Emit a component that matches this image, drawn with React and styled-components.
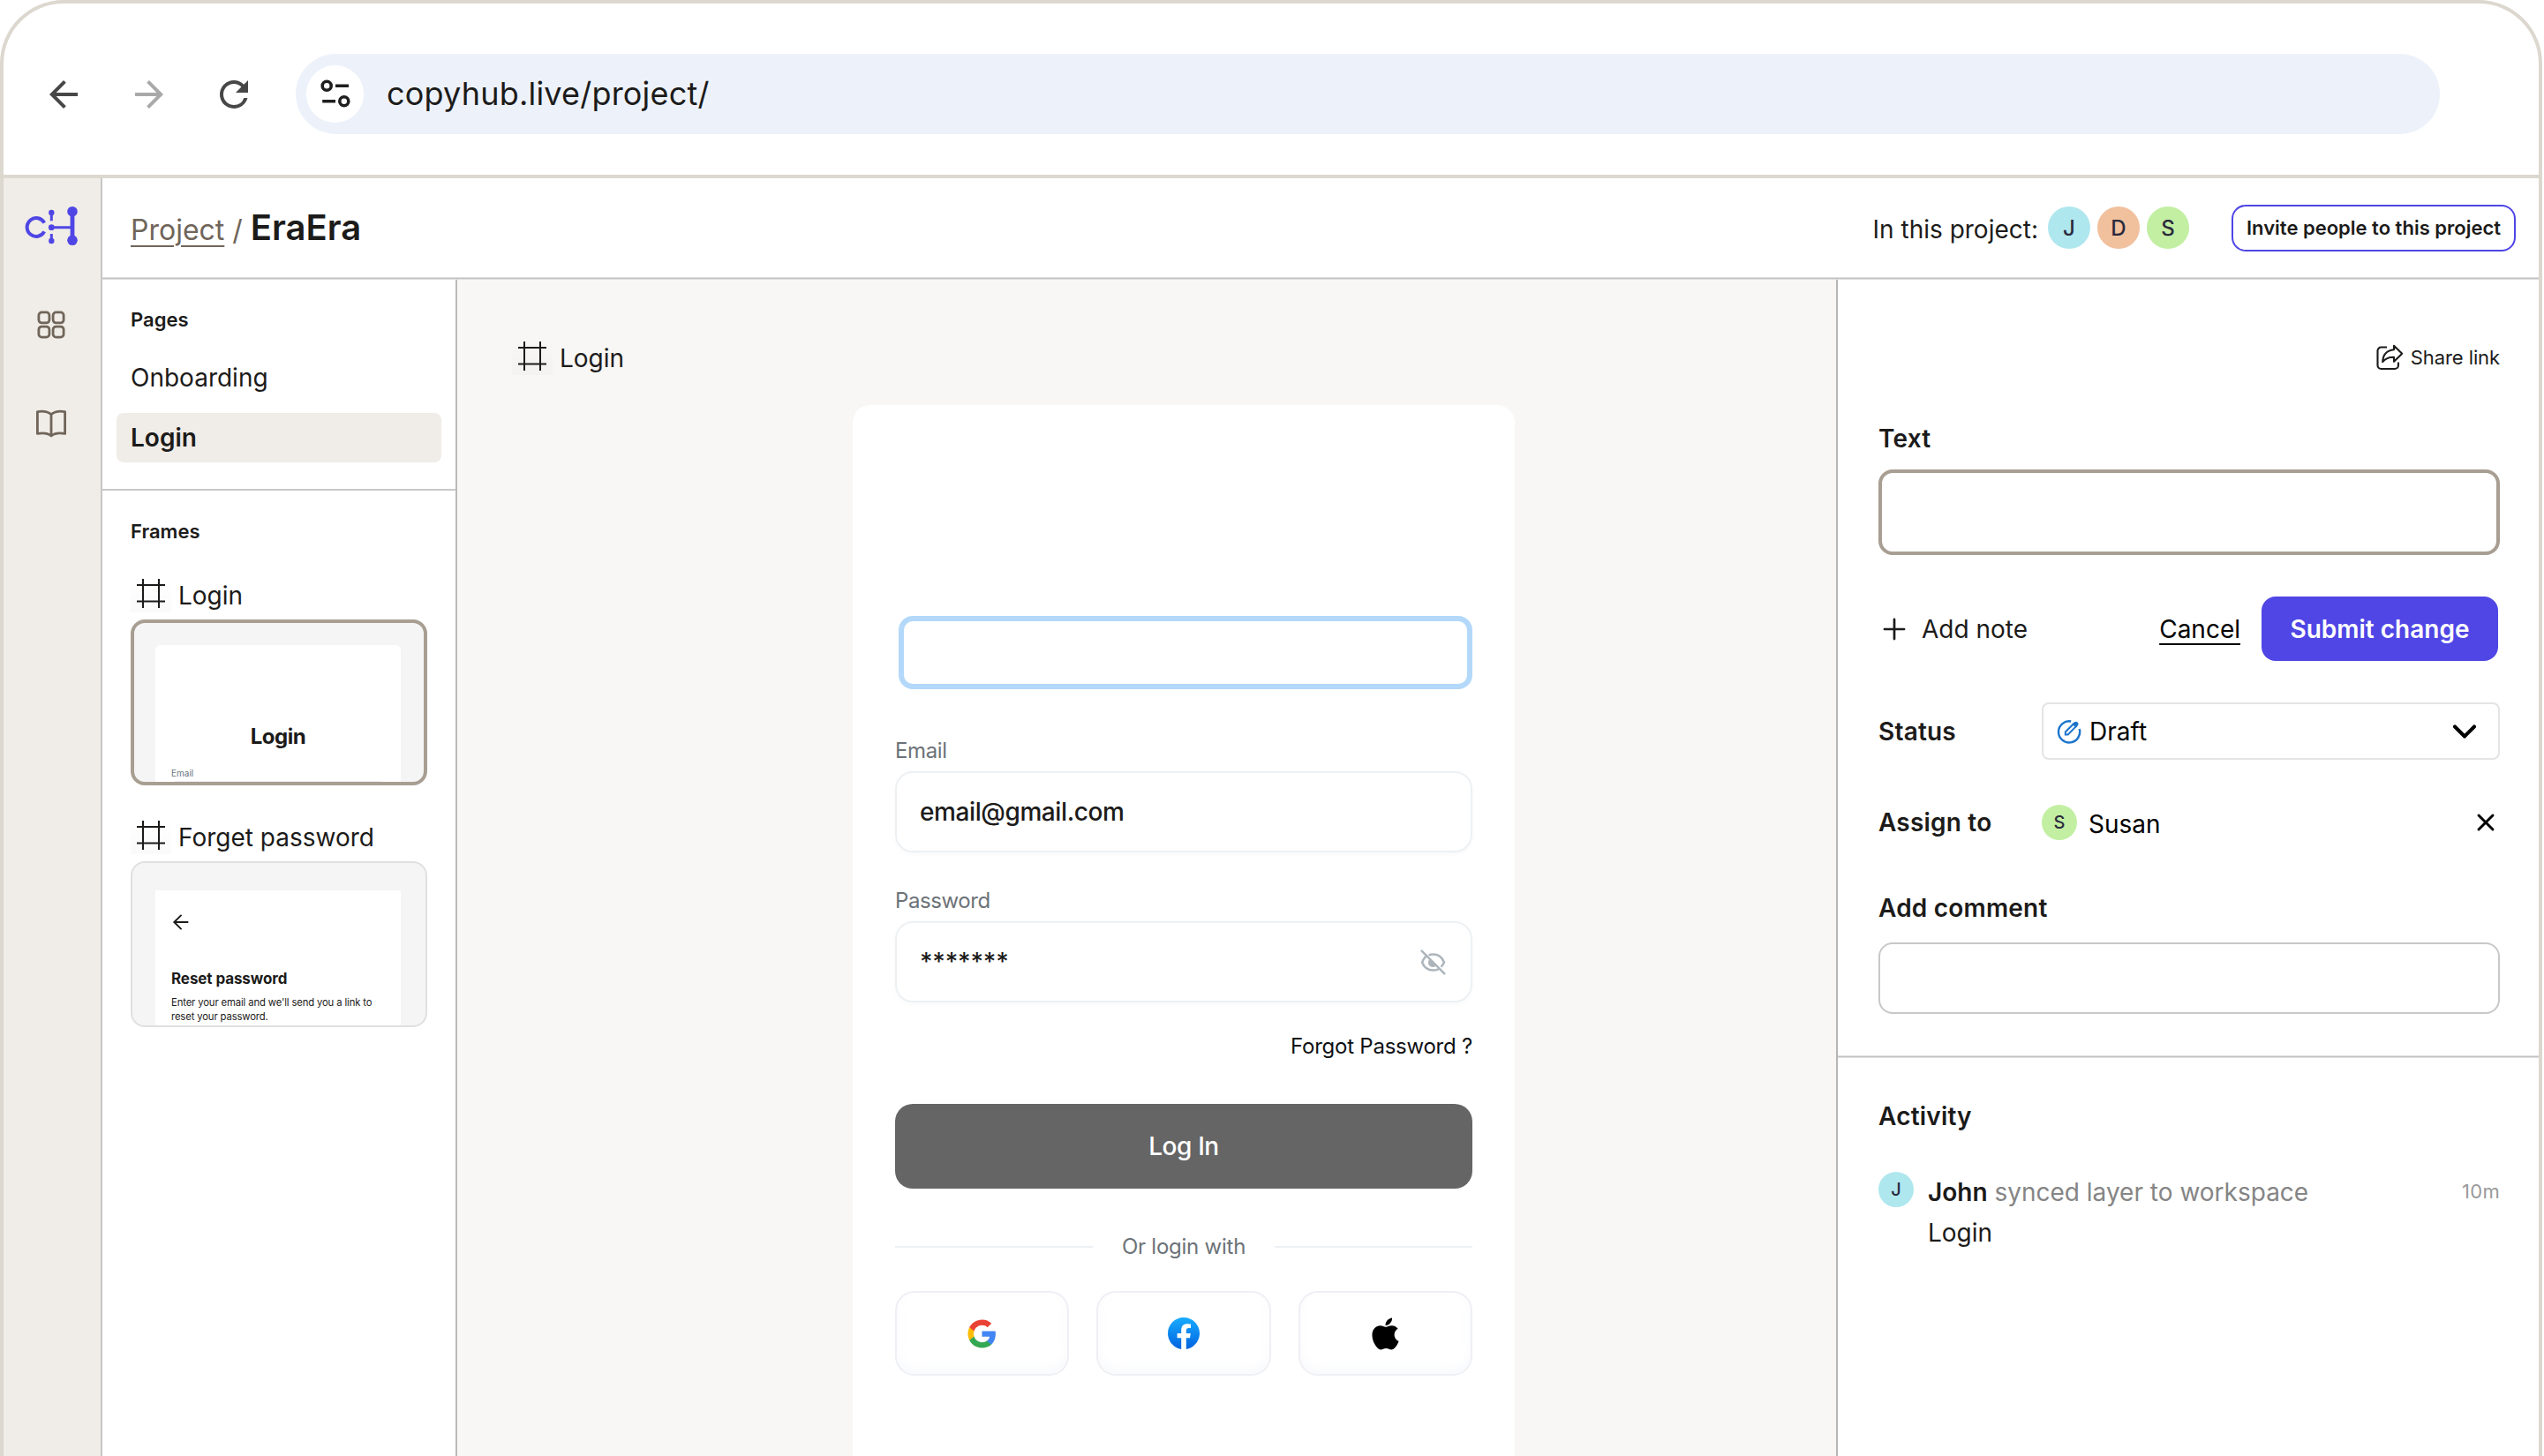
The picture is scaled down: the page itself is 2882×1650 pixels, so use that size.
import React, { useState } from "react";
import styled, { createGlobalStyle } from "styled-components";
import { MdArrowBack, MdArrowForward, MdRefresh } from "react-icons/md";
import { FaApple } from "react-icons/fa6";
import { ArrowLeft, ChevronDown, Plus, X } from "lucide-react";

const GlobalStyle = createGlobalStyle`
    * {
        box-sizing: border-box;
    }
    body {
        margin: 0;
        background: #fff;
        color: #1c1b1a;
        font-family: Inter, "Liberation Sans", sans-serif;
        font-size: 28px;
        overflow: hidden;
    }
    button, input {
        font: inherit;
        color: inherit;
        outline: none;
    }
    svg {
        display: block;
        flex-shrink: 0;
    }
`;

const Window = styled.div`
    width: 2880px;
    height: 1650px;
    border: 4px solid #dcd8cf;
    border-bottom: none;
    border-radius: 72px 72px 0 0;
    overflow: hidden;
    display: flex;
    flex-direction: column;
`;

const BrowserBar = styled.div`
    height: 198px;
    flex-shrink: 0;
    border-bottom: 4px solid #dcd8cf;
    padding: 11px 112px 0 44px;
    display: flex;
    align-items: center;
    gap: 48.5px;
`;

const AddressBar = styled.div`
    flex: 1;
    height: 91px;
    margin-left: -2.5px;
    padding: 0 0 1px 12px;
    border-radius: 46px;
    background: #edf2fa;
    display: flex;
    align-items: center;
    gap: 26px;
    font-size: 36px;
    line-height: 44px;
    letter-spacing: 0.2px;
`;

const SiteInfo = styled.div`
    width: 65px;
    height: 65px;
    border-radius: 50%;
    background: #fff;
    display: flex;
    align-items: center;
    justify-content: center;
`;

const Body = styled.div`
    flex: 1;
    min-height: 0;
    display: flex;
`;

const Rail = styled.nav`
    width: 112px;
    flex-shrink: 0;
    border-right: 2px solid #c8c6c6;
    background: #f0ece7;
    padding: 30px 2px 0 0;
    display: flex;
    flex-direction: column;
    align-items: center;
`;

const RailNav = styled.div`
    margin-top: 32px;
`;

const RailItem = styled.a`
    height: 112px;
    color: #70655a;
    display: flex;
    align-items: center;
    justify-content: center;
`;

const Main = styled.div`
    flex: 1;
    min-width: 0;
    display: flex;
    flex-direction: column;
`;

const Header = styled.header`
    height: 112px;
    flex-shrink: 0;
    padding: 0 26px 0 32px;
    display: flex;
    align-items: center;
    justify-content: space-between;
`;

const Divider = styled.div`
    height: 3px;
    flex-shrink: 0;
    background: linear-gradient(#dedede 1px, #c2c2c2 1px 2px, #dedede 2px);
`;

const Breadcrumb = styled.div`
    padding-top: 2px;
    display: flex;
    align-items: baseline;
    gap: 9px;
    font-size: 32px;
    line-height: 50px;
    color: #70655a;
`;

const Crumb = styled.a`
    text-decoration: underline;
    text-decoration-thickness: 2px;
    text-underline-offset: 6px;
`;

const ProjectName = styled.h1`
    margin: 0;
    font-size: 40px;
    line-height: 50px;
    font-weight: 600;
    color: #1c1b1a;
`;

const Members = styled.div`
    display: flex;
    align-items: center;
    gap: 8px;
`;

const MembersLabel = styled.span`
    margin-right: 3px;
    padding-top: 3px;
    line-height: 36px;
`;

const Avatar = styled.div`
    width: ${(props) => props.$size}px;
    height: ${(props) => props.$size}px;
    flex-shrink: 0;
    border-radius: 50%;
    background: ${(props) => props.$color};
    color: #2a2a3c;
    font-size: ${(props) => props.$size / 2}px;
    font-weight: 500;
    display: flex;
    align-items: center;
    justify-content: center;
`;

const InviteButton = styled.button`
    width: 322px;
    height: 53px;
    margin-left: 40px;
    padding: 0;
    border: 2px solid #4f46e5;
    border-radius: 16px;
    background: #fff;
    font-size: 22px;
    font-weight: 600;
    white-space: nowrap;
`;

const Workspace = styled.div`
    flex: 1;
    min-height: 0;
    display: flex;
`;

const LeftPanel = styled.aside`
    width: 402px;
    flex-shrink: 0;
    border-right: 2px solid #b9b9b9;
`;

const PagesSection = styled.section`
    padding: 30px 16px;
    border-bottom: 2px solid #c9c9c9;
`;

const FramesSection = styled.section`
    padding: 31px 32px 0;
`;

const SectionTitle = styled.h2`
    margin: 0;
    padding-left: ${(props) => props.$indent || 0}px;
    font-size: 22px;
    line-height: 30px;
    font-weight: 600;
`;

const PageItem = styled.div`
    height: 56px;
    margin-top: ${(props) => props.$gap}px;
    padding-left: 16px;
    border-radius: 8px;
    background: ${(props) => (props.$active ? "#f0ece7" : "transparent")};
    font-weight: ${(props) => (props.$active ? 600 : 400)};
    display: flex;
    align-items: center;
`;

const FrameTitle = styled.div`
    height: 48px;
    margin-top: ${(props) => props.$gap || 0}px;
    line-height: 42px;
    display: flex;
    align-items: flex-start;
    gap: 8px;
`;

const FrameIconBox = styled.div`
    width: 46px;
    height: 40px;
    padding: 2px 7px;
    background: linear-gradient(transparent, rgba(0, 0, 0, 0.02));
`;

const Thumb = styled.div`
    width: 336px;
    height: 188px;
    border: ${(props) => (props.$active ? "4px solid #a89e92" : "2px solid #e0e0e0")};
    border-radius: 16px;
    background: #f5f5f5;
    padding: ${(props) => (props.$active ? "25px 26px 0 24px" : "31px 28px 0 26px")};
    overflow: hidden;
`;

const Paper = styled.div`
    height: 100%;
    padding: ${(props) => props.$top}px 18px 0;
    border-radius: ${(props) => props.$radius || 0}px;
    background: #fff;
    border-bottom-left-radius: 0;
    border-bottom-right-radius: 0;
    overflow: hidden;
`;

const BackArrow = styled(ArrowLeft)`
    margin-left: -2px;
`;

const MiniHeading = styled.div`
    font-size: 24px;
    line-height: 30px;
    font-weight: 700;
    letter-spacing: -0.5px;
    text-align: center;
`;

const MiniLabel = styled.div`
    margin-top: 20px;
    font-size: 10px;
    line-height: 12px;
    color: #6c757d;
`;

const MiniInput = styled.div`
    height: 20px;
    margin-top: 3px;
    border: 1px solid #eceff1;
    border-radius: 6px;
`;

const MiniTitle = styled.div`
    margin-top: 40px;
    font-size: 17px;
    line-height: 22px;
    font-weight: 700;
    letter-spacing: -0.1px;
`;

const MiniText = styled.div`
    margin-top: 8px;
    font-size: 11.3px;
    line-height: 16px;
    letter-spacing: -0.14px;
    white-space: nowrap;
`;

const Canvas = styled.main`
    flex: 1;
    min-width: 0;
    padding: 68px 0 0 62px;
    background: #f8f7f5;
    display: flex;
    flex-direction: column;
`;

const LoginCard = styled.div`
    width: 750px;
    flex: 1;
    margin: 26px 0 0 386px;
    padding: 239px 48px 0;
    border-radius: 20px 20px 0 0;
    background: #fff;
`;

const SelectedLayer = styled.div`
    height: 83px;
    margin-left: 4px;
    border: 6px solid #b3d8f9;
    border-radius: 16px;
`;

const FieldLabel = styled.label`
    display: block;
    margin-top: ${(props) => props.$gap}px;
    font-size: 24px;
    line-height: 30px;
    letter-spacing: -0.4px;
    color: #6c7278;
`;

const Field = styled.div`
    height: 92px;
    margin-top: 8px;
    padding: 0 28px 0 26px;
    border: 2px solid #edf1f3;
    border-radius: 20px;
    box-shadow: 0 2px 4px rgba(228, 229, 231, 0.24);
    font-weight: 500;
    letter-spacing: ${(props) => props.$spacing}px;
    display: flex;
    align-items: center;
    justify-content: space-between;
`;

const ForgotLink = styled.div`
    margin-top: 35px;
    font-size: 24px;
    line-height: 30px;
    letter-spacing: -0.24px;
    text-align: right;
    color: #0f1114;
`;

const LoginButton = styled.button`
    width: 100%;
    height: 96px;
    margin-top: 50px;
    border: none;
    border-radius: 20px;
    background: #656565;
    color: #fff;
    font-weight: 500;
    letter-spacing: -0.4px;
`;

const OrRow = styled.div`
    height: 30px;
    margin-top: 51px;
    display: flex;
    align-items: center;
    justify-content: space-between;
    font-size: 24px;
    line-height: 30px;
    letter-spacing: -0.24px;
    color: #6c7278;

    &::before,
    &::after {
        content: "";
        width: 224px;
        height: 2px;
        background: #edf1f3;
    }
`;

const SocialRow = styled.div`
    margin-top: 35px;
    display: grid;
    grid-template-columns: repeat(3, 1fr);
    gap: 31px;
`;

const SocialButton = styled.button`
    height: 96px;
    padding: 0;
    border: 2px solid #efeff5;
    border-radius: 22px;
    background: #fff;
    box-shadow: inset 0 -6px 12px rgba(244, 245, 250, 0.6);
    color: #000;
    display: flex;
    align-items: center;
    justify-content: center;
`;

const RightPanel = styled.aside`
    width: 796px;
    flex-shrink: 0;
    border-left: 2px solid #b5b5b5;
`;

const PanelSection = styled.section`
    padding: ${(props) => props.$pad};
`;

const ShareLink = styled.a`
    height: 30px;
    display: flex;
    align-items: center;
    justify-content: flex-end;
    gap: 8px;
    font-size: 22px;
    line-height: 30px;
    letter-spacing: -0.1px;
`;

const PanelTitle = styled.h3`
    width: ${(props) => props.$width || "auto"};
    margin: ${(props) => props.$gap || 0}px 0 0;
    font-size: 28px;
    line-height: 36px;
    font-weight: 600;
    letter-spacing: 0.2px;
`;

const TextBox = styled.input`
    display: block;
    width: 100%;
    height: ${(props) => props.$height}px;
    margin-top: ${(props) => props.$gap}px;
    padding: 0 20px;
    border: ${(props) => props.$border};
    border-radius: 16px;
    background: #fff;
`;

const Actions = styled.div`
    height: 73px;
    margin-top: 47px;
    display: flex;
    align-items: center;
`;

const AddNote = styled.div`
    flex: 1;
    margin-left: -1px;
    display: flex;
    align-items: center;
    gap: 12px;
`;

const Cancel = styled.a`
    margin-right: 24px;
    color: #000;
    text-decoration: underline;
    text-decoration-thickness: 2px;
    text-underline-offset: 6px;
`;

const SubmitButton = styled.button`
    width: 268px;
    height: 73px;
    margin-right: 2px;
    padding: 0;
    border: none;
    border-radius: 16px;
    background: #4f46e5;
    color: #fff;
    font-weight: 600;
`;

const Row = styled.div`
    height: ${(props) => props.$height}px;
    margin-top: ${(props) => props.$gap}px;
    display: flex;
    align-items: center;
    color: #000;

    h3 {
        color: #1c1b1a;
    }
`;

const StatusSelect = styled.div`
    flex: 1;
    height: 65px;
    padding: 0 16px 0 15px;
    border: 2px solid #e4e4e4;
    border-radius: 8px;
    display: flex;
    align-items: center;
    gap: 9px;
`;

const Grow = styled.span`
    flex: 1;
    padding-top: ${(props) => props.$drop || 0}px;
    padding-left: ${(props) => props.$indent || 0}px;
`;

const ActivityItem = styled.div`
    margin-top: 45px;
    display: flex;
    align-items: flex-start;
    gap: 16px;
    line-height: 46px;
`;

const ActivityText = styled.div`
    flex: 1;
    color: #858585;

    strong {
        font-weight: 600;
        color: #1c1b1a;
    }
    div {
        color: #1c1b1a;
    }
`;

const Time = styled.span`
    font-size: 22px;
    line-height: 44px;
    letter-spacing: 0.3px;
    color: #9a9a9a;
`;

const TuneIcon = () => (
    <svg width="36" height="34" viewBox="0 0 36 34" fill="none" stroke="#1f1f1f" strokeWidth="3.6">
        <circle cx="8.2" cy="8.2" r="5" />
        <path d="M18 8.2h15M3.2 25.8H18" />
        <circle cx="27.8" cy="25.8" r="5" />
    </svg>
);

const Logo = () => (
    <svg width="61" height="48" viewBox="0 0 61 48" fill="none" stroke="#4f46e5">
        <path d="M22.2 20.6a10.4 10.4 0 1 0 0 9.8" strokeWidth="4" />
        <path d="M30.3 9v9.3M30.3 33v8M30.3 25.7H54" strokeWidth="3" />
        <path d="M54 8v32" strokeWidth="4.8" />
        <g fill="#4f46e5" stroke="none">
            <circle cx="30.3" cy="9" r="3.2" />
            <circle cx="30.3" cy="25.7" r="3.4" />
            <circle cx="30.3" cy="41" r="3.2" />
            <circle cx="54" cy="7.7" r="5.8" />
            <circle cx="54" cy="40.3" r="5.8" />
        </g>
    </svg>
);

const GridIcon = () => (
    <svg width="32" height="32" viewBox="0 0 32 32" fill="none" stroke="currentColor" strokeWidth="2.8">
        <rect x="1.9" y="1.9" width="12" height="12" rx="3.4" />
        <rect x="18.1" y="1.9" width="12" height="12" rx="3.4" />
        <rect x="1.9" y="18.1" width="12" height="12" rx="3.4" />
        <rect x="18.1" y="18.1" width="12" height="12" rx="3.4" />
    </svg>
);

const BookIcon = () => (
    <svg width="34" height="32" viewBox="0 0 34 32" fill="none" stroke="currentColor" strokeWidth="2.8" strokeLinejoin="round">
        <path d="M17 5.6C13 2.2 7 1.6 1.4 2.6v24.8C7 26.4 13 26.6 17 30c4-3.4 10-3.6 15.6-2.6V2.6C27 1.6 21 2.2 17 5.6zM17 5.6V30" />
    </svg>
);

const FrameIcon = () => (
    <FrameIconBox>
        <svg width="32" height="33" viewBox="0 0 32 33" fill="none" stroke="#1c1b1a" strokeWidth="2">
            <path d="M7 0v33M25 0v33M0 7h32M0 25.5h32" />
        </svg>
    </FrameIconBox>
);

const EyeOffIcon = () => (
    <svg width="29" height="29" viewBox="0 0 28 28" fill="none" stroke="#acb5bb" strokeWidth="2.4" strokeLinecap="round">
        <path d="M1.6 1.5 26.4 26.4" />
        <path d="M10.2 5.8c1.2-.4 2.5-.6 3.8-.6 6 0 10.2 4 12 8.8-.6 1.6-1.5 3-2.6 4.3" />
        <path d="M5.6 8C4 9.6 2.8 11.7 2 14c1.8 4.8 6 8.8 12 8.8 2.1 0 4-.5 5.6-1.3" />
        <path d="M10.3 11.2a4.4 4.4 0 0 0 6.4 6.2z" fill="#acb5bb" strokeWidth="1" />
    </svg>
);

const GoogleIcon = () => (
    <svg width="35" height="35" viewBox="0 0 24 24">
        <path fill="#4285F4" d="M22.56 12.25c0-.78-.07-1.53-.2-2.25H12v4.26h5.92c-.26 1.37-1.04 2.53-2.21 3.31v2.77h3.57c2.08-1.92 3.28-4.74 3.28-8.09z" />
        <path fill="#34A853" d="M12 23c2.97 0 5.46-.98 7.28-2.66l-3.57-2.77c-.98.66-2.23 1.06-3.71 1.06-2.86 0-5.29-1.93-6.16-4.53H2.18v2.84C3.99 20.53 7.7 23 12 23z" />
        <path fill="#FBBC05" d="M5.84 14.09c-.22-.66-.35-1.36-.35-2.09s.13-1.43.35-2.09V7.07H2.18C1.43 8.55 1 10.22 1 12s.43 3.45 1.18 4.93l2.85-2.22.81-.62z" />
        <path fill="#EA4335" d="M12 5.38c1.62 0 3.06.56 4.21 1.64l3.15-3.15C17.45 2.09 14.97 1 12 1 7.7 1 3.99 3.47 2.18 7.07l3.66 2.84c.87-2.6 3.3-4.53 6.16-4.53z" />
    </svg>
);

const FacebookIcon = () => (
    <svg width="36" height="36" viewBox="0 0 24 24">
        <defs>
            <linearGradient id="fb" x1="0" y1="0" x2="0" y2="1">
                <stop offset="0" stopColor="#18acfe" />
                <stop offset="1" stopColor="#0163e0" />
            </linearGradient>
        </defs>
        <path fill="url(#fb)" d="M24 12.073c0-6.627-5.373-12-12-12s-12 5.373-12 12c0 5.99 4.388 10.954 10.125 11.854v-8.385H7.078v-3.47h3.047V9.43c0-3.007 1.792-4.669 4.533-4.669 1.312 0 2.686.235 2.686.235v2.953H15.83c-1.491 0-1.956.925-1.956 1.874v2.25h3.328l-.532 3.47h-2.796v8.385C19.612 23.027 24 18.062 24 12.073z" />
    </svg>
);

const ShareIcon = () => (
    <svg width="32" height="32" viewBox="0 0 32 32" fill="none" stroke="#1c1b1a" strokeWidth="2.1" strokeLinejoin="round">
        <path d="M13 4.5H6.5a4 4 0 0 0-4 4V25a4 4 0 0 0 4 4H22a4 4 0 0 0 4-4v-3.5" />
        <path d="M21 2.8l9.2 8.9L21 20.8v-5c-5.5-.2-9.6 1.5-12.8 5.4C8.5 13.3 13 8 21 7.2z" />
    </svg>
);

const DraftIcon = () => (
    <svg width="28" height="28" viewBox="0 0 28 28" fill="none" stroke="#1b74cc" strokeWidth="2.4">
        <path d="M16.2 2.5A12.1 12.1 0 1 0 25.7 11" />
        <path d="M9.8 17.4v-2.9l9.3-9.3 2.9 2.9-9.3 9.3z" strokeWidth="2" />
        <path d="M18.6 5.7l1.6-1.6a1.8 1.8 0 0 1 2.9 2.9l-1.6 1.6z" fill="#1b74cc" strokeWidth="1.4" />
    </svg>
);

const members = [
    { initial: "J", color: "#afe7ee" },
    { initial: "D", color: "#f1c09d" },
    { initial: "S", color: "#c2efa2" },
];

const App = () => {
    const [text, setText] = useState("");
    const [comment, setComment] = useState("");

    return (
        <>
            <GlobalStyle />
            <Window>
                <BrowserBar>
                    <MdArrowBack size={48} color="#474747" />
                    <MdArrowForward size={48} color="#a9a9a9" />
                    <MdRefresh size={48} color="#474747" />
                    <AddressBar>
                        <SiteInfo>
                            <TuneIcon />
                        </SiteInfo>
                        copyhub.live/project/
                    </AddressBar>
                </BrowserBar>
                <Body>
                    <Rail>
                        <Logo />
                        <RailNav>
                            <RailItem>
                                <GridIcon />
                            </RailItem>
                            <RailItem>
                                <BookIcon />
                            </RailItem>
                        </RailNav>
                    </Rail>
                    <Main>
                        <Header>
                            <Breadcrumb>
                                <Crumb>Project</Crumb>
                                <span>/</span>
                                <ProjectName>EraEra</ProjectName>
                            </Breadcrumb>
                            <Members>
                                <MembersLabel>In this project:</MembersLabel>
                                {members.map((member) => (
                                    <Avatar key={member.initial} $size={48} $color={member.color}>
                                        {member.initial}
                                    </Avatar>
                                ))}
                                <InviteButton>Invite people to this project</InviteButton>
                            </Members>
                        </Header>
                        <Divider />
                        <Workspace>
                            <LeftPanel>
                                <PagesSection>
                                    <SectionTitle $indent={16}>Pages</SectionTitle>
                                    <PageItem $gap={23}>Onboarding</PageItem>
                                    <PageItem $gap={12} $active>
                                        Login
                                    </PageItem>
                                </PagesSection>
                                <FramesSection>
                                    <SectionTitle>Frames</SectionTitle>
                                    <FrameTitle $gap={37}>
                                        <FrameIcon />
                                        Login
                                    </FrameTitle>
                                    <Thumb $active>
                                        <Paper $top={89} $radius={6}>
                                            <MiniHeading>Login</MiniHeading>
                                            <MiniLabel>Email</MiniLabel>
                                            <MiniInput />
                                        </Paper>
                                    </Thumb>
                                    <FrameTitle $gap={38}>
                                        <FrameIcon />
                                        Forget password
                                    </FrameTitle>
                                    <Thumb>
                                        <Paper $top={23}>
                                            <BackArrow size={26} strokeWidth={1.8} />
                                            <MiniTitle>Reset password</MiniTitle>
                                            <MiniText>
                                                Enter your email and we'll send you a link to
                                                <br />
                                                reset your password.
                                            </MiniText>
                                        </Paper>
                                    </Thumb>
                                </FramesSection>
                            </LeftPanel>
                            <Canvas>
                                <FrameTitle>
                                    <FrameIcon />
                                    Login
                                </FrameTitle>
                                <LoginCard>
                                    <SelectedLayer />
                                    <FieldLabel $gap={55}>Email</FieldLabel>
                                    <Field $spacing={-0.4}>email@gmail.com</Field>
                                    <FieldLabel $gap={40}>Password</FieldLabel>
                                    <Field $spacing={-0.2}>
                                        *******
                                        <EyeOffIcon />
                                    </Field>
                                    <ForgotLink>Forgot Password ?</ForgotLink>
                                    <LoginButton>Log In</LoginButton>
                                    <OrRow>Or login with</OrRow>
                                    <SocialRow>
                                        <SocialButton>
                                            <GoogleIcon />
                                        </SocialButton>
                                        <SocialButton>
                                            <FacebookIcon />
                                        </SocialButton>
                                        <SocialButton>
                                            <FaApple size={41} />
                                        </SocialButton>
                                    </SocialRow>
                                </LoginCard>
                            </Canvas>
                            <RightPanel>
                                <PanelSection $pad="73px 44px 47px 46px">
                                    <ShareLink>
                                        <ShareIcon />
                                        Share link
                                    </ShareLink>
                                    <PanelTitle $gap={59}>Text</PanelTitle>
                                    <TextBox
                                        $height={97}
                                        $gap={17}
                                        $border="4px solid #a89e92"
                                        value={text}
                                        onChange={(e) => setText(e.target.value)}
                                    />
                                    <Actions>
                                        <AddNote>
                                            <Plus size={38} strokeWidth={1.7} />
                                            Add note
                                        </AddNote>
                                        <Cancel>Cancel</Cancel>
                                        <SubmitButton>Submit change</SubmitButton>
                                    </Actions>
                                    <Row $height={65} $gap={47}>
                                        <PanelTitle $width="185px">Status</PanelTitle>
                                        <StatusSelect>
                                            <DraftIcon />
                                            <Grow>Draft</Grow>
                                            <ChevronDown size={44} strokeWidth={2.2} />
                                        </StatusSelect>
                                    </Row>
                                    <Row $height={40} $gap={51}>
                                        <PanelTitle $width="185px">Assign to</PanelTitle>
                                        <Avatar $size={40} $color="#c2efa2">
                                            S
                                        </Avatar>
                                        <Grow $indent={13} $drop={3}>
                                            Susan
                                        </Grow>
                                        <X size={32} strokeWidth={2.2} />
                                    </Row>
                                    <PanelTitle $gap={59}>Add comment</PanelTitle>
                                    <TextBox
                                        $height={81}
                                        $gap={21}
                                        $border="2px solid #c8c8c8"
                                        value={comment}
                                        onChange={(e) => setComment(e.target.value)}
                                    />
                                </PanelSection>
                                <Divider />
                                <PanelSection $pad="48px 44px 0 46px">
                                    <PanelTitle>Activity</PanelTitle>
                                    <ActivityItem>
                                        <Avatar $size={40} $color="#afe7ee">
                                            J
                                        </Avatar>
                                        <ActivityText>
                                            <strong>John</strong> synced layer to workspace
                                            <div>Login</div>
                                        </ActivityText>
                                        <Time>10m</Time>
                                    </ActivityItem>
                                </PanelSection>
                            </RightPanel>
                        </Workspace>
                    </Main>
                </Body>
            </Window>
        </>
    );
};

export default App;
